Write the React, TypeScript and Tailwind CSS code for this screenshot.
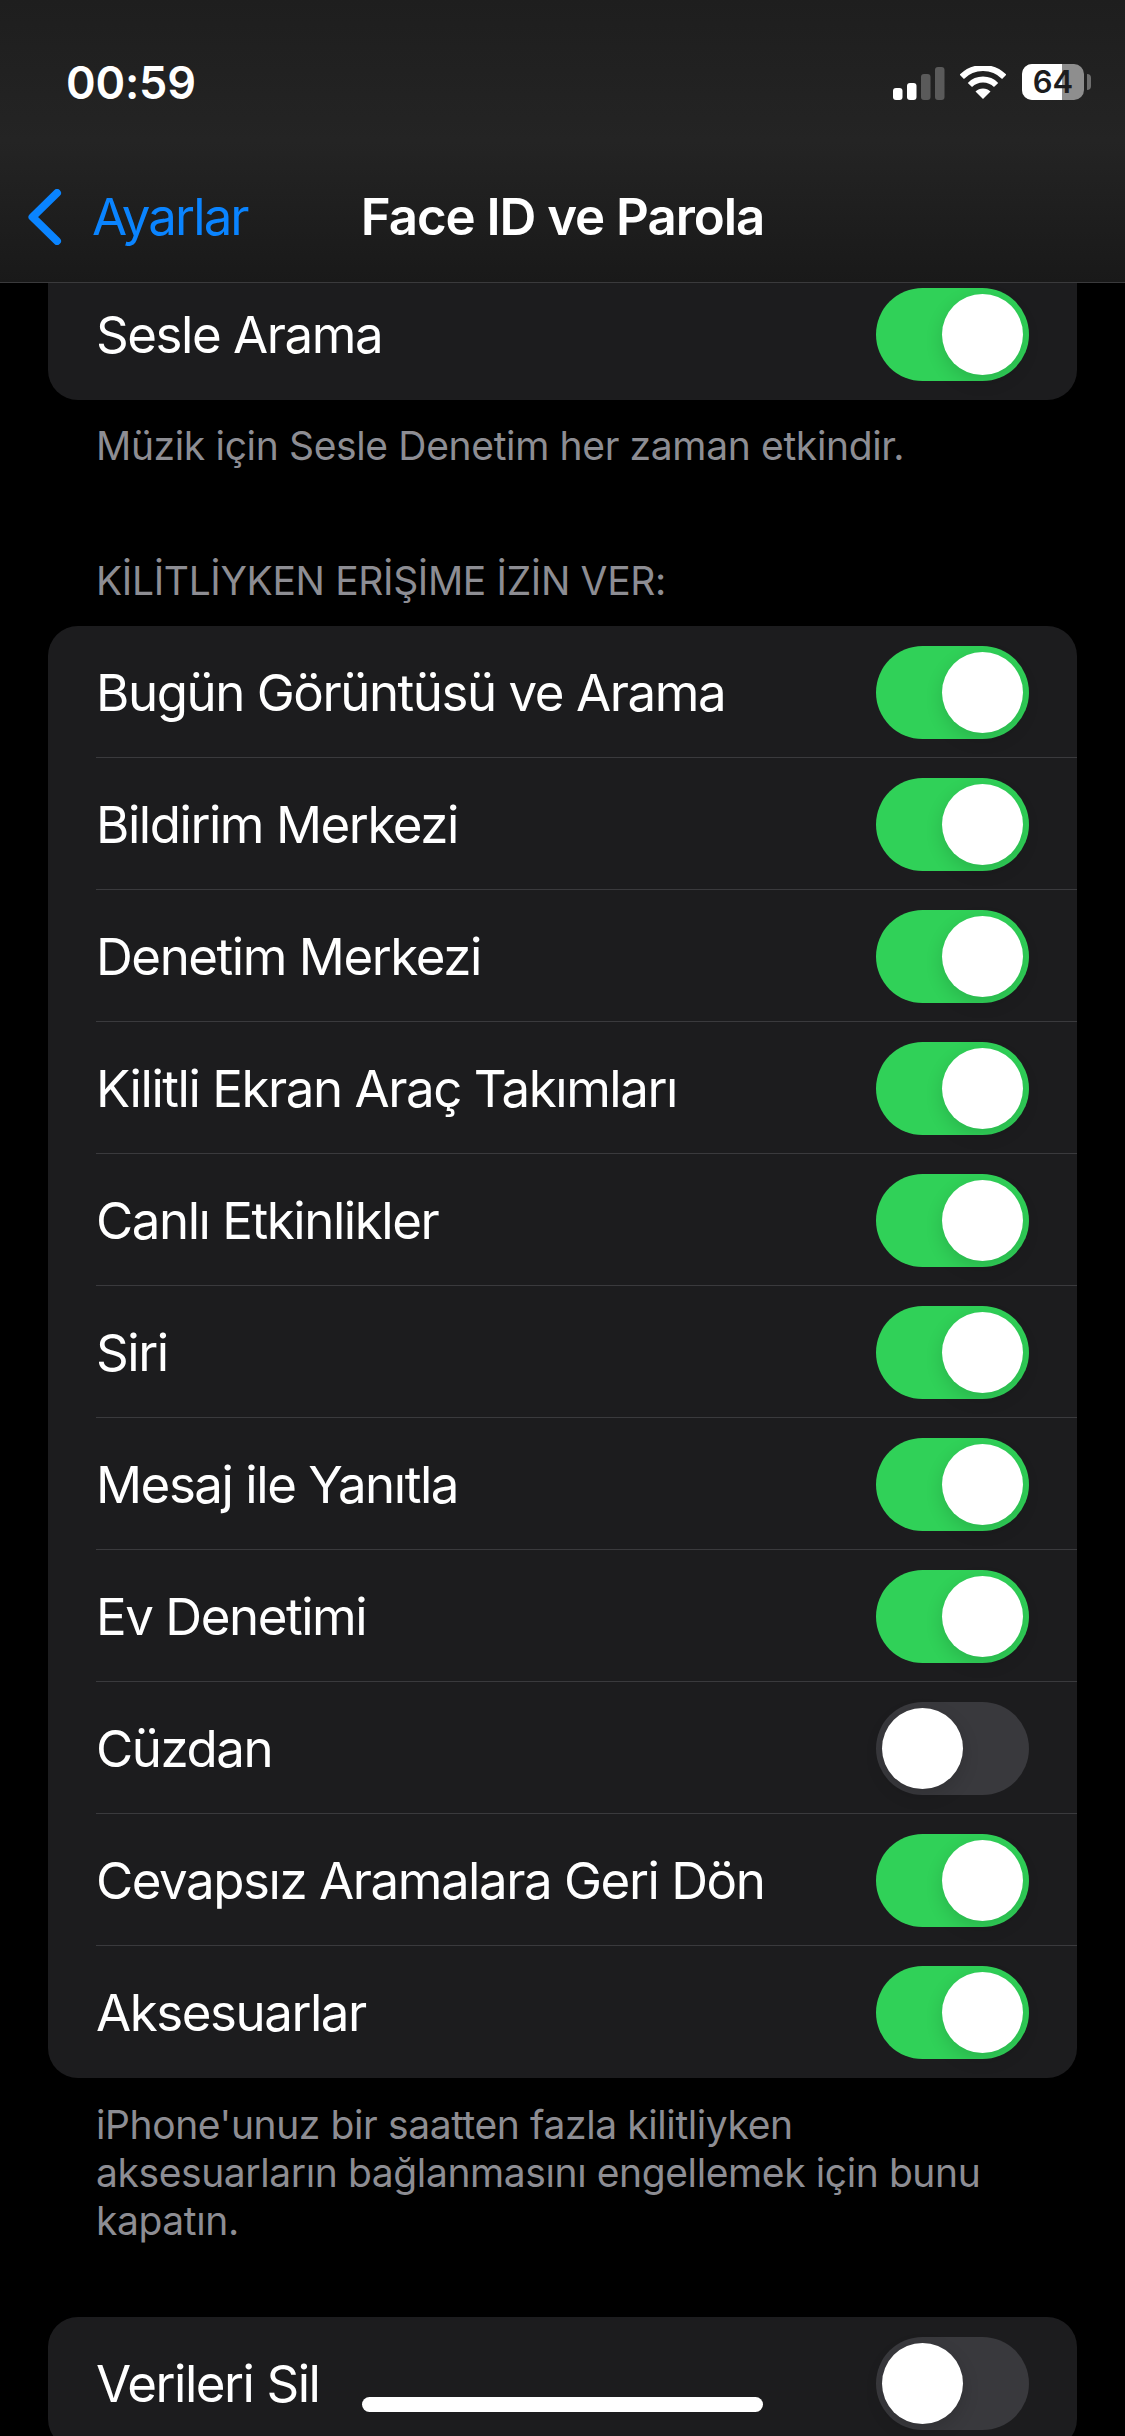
import React from 'react';

const lockedRows = [
  { label: 'Bugün Görüntüsü ve Arama', on: true },
  { label: 'Bildirim Merkezi', on: true },
  { label: 'Denetim Merkezi', on: true },
  { label: 'Kilitli Ekran Araç Takımları', on: true },
  { label: 'Canlı Etkinlikler', on: true },
  { label: 'Siri', on: true },
  { label: 'Mesaj ile Yanıtla', on: true },
  { label: 'Ev Denetimi', on: true },
  { label: 'Cüzdan', on: false },
  { label: 'Cevapsız Aramalara Geri Dön', on: true },
  { label: 'Aksesuarlar', on: true },
];

const Toggle: React.FC<{ on: boolean }> = ({ on }) => (
  <div
    className={`flex h-[93px] w-[153px] shrink-0 items-center rounded-full px-[6px] ${
      on ? 'justify-end bg-[#30d158]' : 'justify-start bg-[#39393d]'
    }`}
  >
    <div className="h-[81px] w-[81px] rounded-full bg-white shadow-[0_6px_18px_rgba(0,0,0,0.14)]" />
  </div>
);

const Row: React.FC<{ label: string; on: boolean; last?: boolean }> = ({ label, on, last }) => (
  <div className="h-[132px] pl-[48px]">
    <div
      className={`flex h-[132px] items-center justify-between pt-px pr-[48px] ${
        last ? '' : 'border-b border-[#3a3a3d]'
      }`}
    >
      <span className="pt-[1px] text-[51px] leading-[60px] tracking-[-1.45px] text-white">{label}</span>
      <Toggle on={on} />
    </div>
  </div>
);

const StatusIcons = () => (
  <div className="flex items-center">
    <svg width="52" height="33" viewBox="0 0 52 33" className="mt-[2px]">
      <rect x="0" y="21" width="9.5" height="12" rx="3" fill="#fff" />
      <rect x="14" y="16" width="9.5" height="17" rx="3" fill="#fff" />
      <rect x="28" y="7" width="9.5" height="26" rx="3" fill="#5a5a5a" />
      <rect x="42" y="0" width="9.5" height="33" rx="3" fill="#5a5a5a" />
    </svg>
    <svg width="46" height="33" viewBox="0 0 46 33" className="ml-[15px]">
      <path d="M1.8 10.8 A30 30 0 0 1 44.2 10.8" fill="none" stroke="#fff" strokeWidth="6" />
      <path d="M9.9 19 A18.5 18.5 0 0 1 36.1 19" fill="none" stroke="#fff" strokeWidth="6" />
      <path d="M23 33 L15.5 25.5 A10.6 10.6 0 0 1 30.5 25.5 Z" fill="#fff" />
    </svg>
    <div className="relative ml-[16px] flex h-[36px] w-[62px] items-center justify-center rounded-[10px] bg-[#8e8e8e]">
      <div className="absolute inset-y-0 left-0 w-[40px] rounded-l-[10px] bg-white" />
      <span className="relative text-[31px] leading-[36px] font-semibold text-[#1c1c1e]">64</span>
    </div>
    <div className="ml-[3px] h-[16px] w-[4px] rounded-r-full bg-[#6e6e6e]" />
  </div>
);

export default function App() {
  return (
    <div
      className="relative h-[2436px] w-[1125px] overflow-hidden bg-black"
      style={{ fontFamily: 'Inter, "Noto Sans", sans-serif' }}
    >
      {/* Status bar and nav */}
      <header className="relative z-10 h-[283px] border-b border-[#3a3a3c] bg-linear-to-b from-[#1e1e1e] via-[#242424] to-[#191919]">
        <div className="flex h-[164px] items-center justify-between pr-[34px] pl-[66px]">
          <span className="text-[45px] leading-none font-semibold tracking-[-0.2px] text-white">00:59</span>
          <StatusIcons />
        </div>
        <div className="relative flex h-[102px] items-center justify-center pt-[3px]">
          <div className="absolute left-[28px] flex items-center">
            <svg width="34" height="56" viewBox="0 0 34 56">
              <path
                d="M29 4 L4.5 28 L29 52"
                fill="none"
                stroke="#0a84ff"
                strokeWidth="8"
                strokeLinecap="round"
                strokeLinejoin="round"
              />
            </svg>
            <span className="ml-[30px] text-[51px] leading-[60px] tracking-[-1.9px] text-[#0a84ff]">Ayarlar</span>
          </div>
          <span className="text-[51px] leading-[60px] font-semibold tracking-[-1.05px] text-white">
            Face ID ve Parola
          </span>
        </div>
      </header>

      <main className="px-[48px]">
        {/* Card scrolled partly under the header */}
        <div className="h-[117px] overflow-hidden rounded-b-[30px] bg-[#1c1c1e]">
          <div className="-mt-[15px]">
            <Row label="Sesle Arama" on last />
          </div>
        </div>
        <p className="mt-[22px] pl-[48px] text-[39px] leading-[48px] tracking-[-0.35px] text-[#8d8d93]">
          Müzik için Sesle Denetim her zaman etkindir.
        </p>

        <p className="mt-[87px] pl-[48px] text-[39px] leading-[48px] tracking-[-0.35px] text-[#8d8d93]">
          KİLİTLİYKEN ERİŞİME İZİN VER:
        </p>
        <div className="mt-[21px] overflow-hidden rounded-[30px] bg-[#1c1c1e]">
          {lockedRows.map((row, i) => (
            <Row key={row.label} label={row.label} on={row.on} last={i === lockedRows.length - 1} />
          ))}
        </div>
        <p className="mt-[23px] w-[960px] pl-[48px] text-[39px] leading-[48px] tracking-[-0.4px] text-[#8d8d93]">
          iPhone'unuz bir saatten fazla kilitliyken aksesuarların bağlanmasını engellemek için bunu kapatın.
        </p>

        <div className="mt-[72px] overflow-hidden rounded-[30px] bg-[#1c1c1e]">
          <Row label="Verileri Sil" on={false} last />
        </div>
      </main>

      {/* Home indicator */}
      <div className="absolute top-[2397px] left-[362px] h-[15px] w-[401px] rounded-full bg-white" />
    </div>
  );
}
